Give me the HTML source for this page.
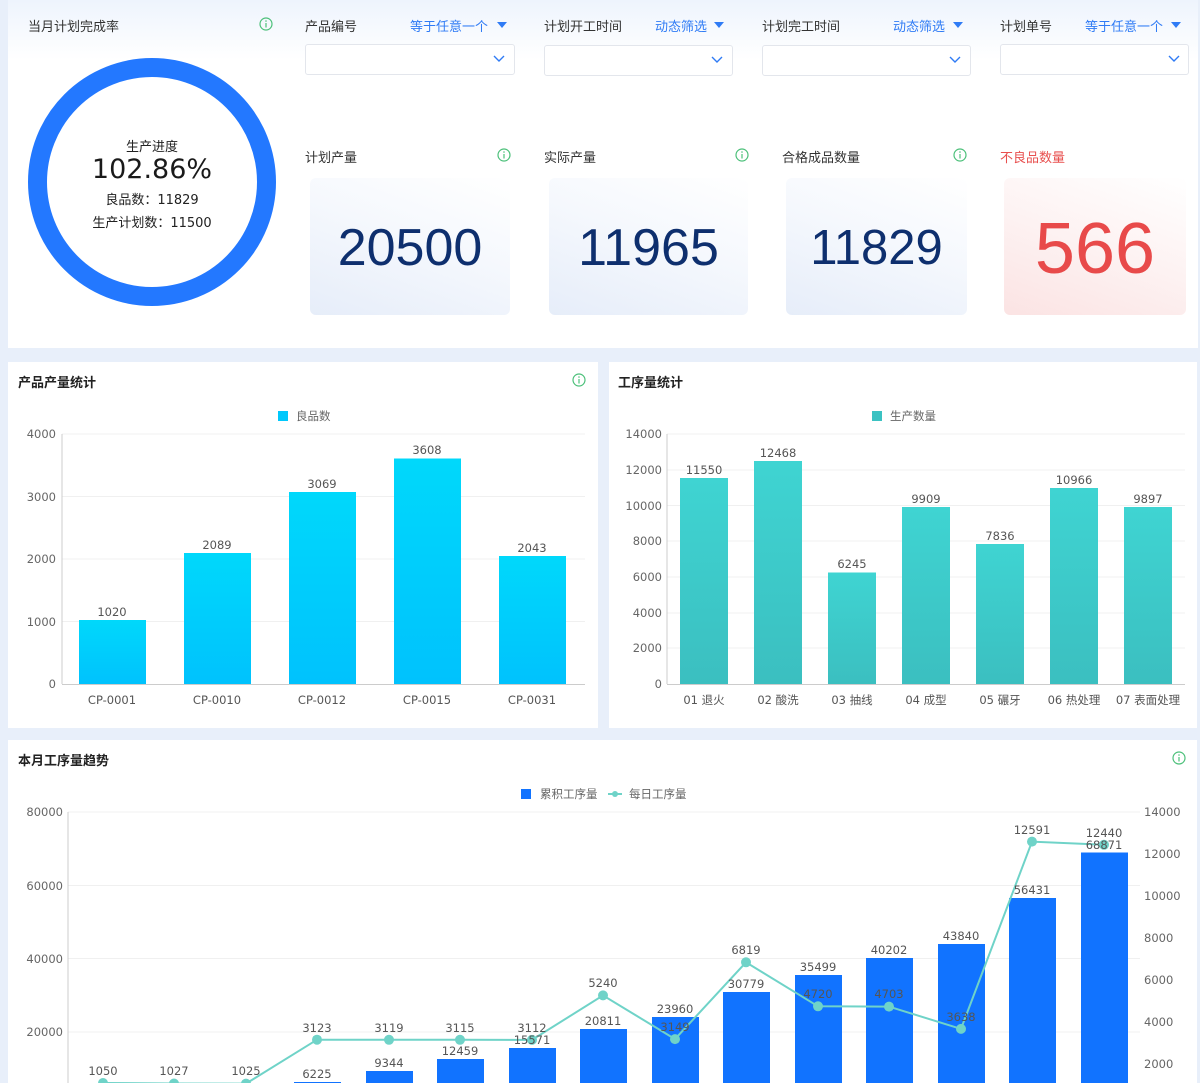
<!DOCTYPE html>
<html><head><meta charset="utf-8"><style>
*{margin:0;padding:0;box-sizing:border-box}
body{width:1200px;height:1083px;overflow:hidden;background:#e8effa;font-family:"Liberation Sans","Noto Sans CJK SC",sans-serif;position:relative;color:#333}
.a{position:absolute;white-space:nowrap}
.panel{position:absolute;background:#fff}
.lbl{font-size:13px;color:#333}
.blue{font-size:13px;color:#2f7bf5}
.sel{position:absolute;height:31px;border:1px solid #e3e6ec;border-radius:3px;background:#fff}
.card{position:absolute;top:178px;height:137px;border-radius:6px;background:linear-gradient(20deg,#e6edf9 0%,#f5f8fd 55%,#ffffff 100%)}
.num{position:absolute;left:0;right:0;text-align:center;font-family:"Liberation Sans",sans-serif;color:#0e2f6e}
.ttl{font-size:13px;font-weight:bold;color:#222}
.dv{font-family:"DejaVu Sans","Noto Sans CJK SC",sans-serif}
</style></head><body>
<div class="panel" style="left:8px;top:0;width:1190px;height:348px;background:linear-gradient(180deg,#eef4fd 0,#fff 60px,#fff 100%)"></div>
<div class="a lbl" style="left:28px;top:16px">当月计划完成率</div>
<svg class="a" style="left:0;top:0" width="1200" height="348">
<g fill="none" stroke="#4cc07a" stroke-width="1.2"><circle cx="266" cy="24" r="6"/><circle cx="504" cy="155" r="6"/><circle cx="742" cy="155" r="6"/><circle cx="960" cy="155" r="6"/></g>
<g fill="#4cc07a"><rect x="265.4" y="23" width="1.2" height="4.5"/><circle cx="266" cy="21" r=".8"/><rect x="503.4" y="154" width="1.2" height="4.5"/><circle cx="504" cy="152" r=".8"/><rect x="741.4" y="154" width="1.2" height="4.5"/><circle cx="742" cy="152" r=".8"/><rect x="959.4" y="154" width="1.2" height="4.5"/><circle cx="960" cy="152" r=".8"/></g>
<circle cx="152" cy="182" r="114.5" fill="none" stroke="#2378ff" stroke-width="19"/>
<g fill="#2f7bf5"><path d="M497 22h10l-5 6z"/><path d="M714 22h10l-5 6z"/><path d="M953 22h10l-5 6z"/><path d="M1171 22h10l-5 6z"/></g>
</svg>
<div class="a" style="left:52px;width:200px;text-align:center;top:136px;font-size:13px;color:#222">生产进度</div>
<div class="a dv" style="left:52px;width:200px;text-align:center;top:154px;font-size:27px;color:#1a1a1a">102.86%</div>
<div class="a dv" style="left:52px;width:200px;text-align:center;top:189px;font-size:13px;color:#222">良品数：11829</div>
<div class="a dv" style="left:52px;width:200px;text-align:center;top:212px;font-size:13px;color:#222">生产计划数：11500</div>

<div class="a lbl" style="left:305px;top:16px">产品编号</div><div class="a blue" style="left:410px;top:16px">等于任意一个</div>
<div class="a lbl" style="left:544px;top:16px">计划开工时间</div><div class="a blue" style="left:655px;top:16px">动态筛选</div>
<div class="a lbl" style="left:762px;top:16px">计划完工时间</div><div class="a blue" style="left:893px;top:16px">动态筛选</div>
<div class="a lbl" style="left:1000px;top:16px">计划单号</div><div class="a blue" style="left:1085px;top:16px">等于任意一个</div>
<div class="sel" style="left:305px;top:44px;width:210px"></div>
<div class="sel" style="left:544px;top:45px;width:189px"></div>
<div class="sel" style="left:762px;top:45px;width:209px"></div>
<div class="sel" style="left:1000px;top:44px;width:189px"></div>
<svg class="a" style="left:0;top:0" width="1200" height="80">
<g fill="none" stroke="#2f7bf5" stroke-width="1.4"><path d="M494 56l5 5 5-5"/><path d="M712 57l5 5 5-5"/><path d="M950 57l5 5 5-5"/><path d="M1169 56l5 5 5-5"/></g>
</svg>

<div class="a lbl" style="left:305px;top:147px">计划产量</div>
<div class="a lbl" style="left:544px;top:147px">实际产量</div>
<div class="a lbl" style="left:782px;top:147px">合格成品数量</div>
<div class="a lbl" style="left:1000px;top:147px;color:#e8504f">不良品数量</div>
<div class="card" style="left:310px;width:200px"><div class="num" style="top:40px;font-size:52px">20500</div></div>
<div class="card" style="left:549px;width:199px"><div class="num" style="top:40px;font-size:52px">11965</div></div>
<div class="card" style="left:786px;width:181px"><div class="num" style="top:42px;font-size:49px">11829</div></div>
<div class="card" style="left:1004px;width:182px;background:linear-gradient(20deg,#fbe3e3 0%,#fdf2f2 50%,#fff 100%)"><div class="num" style="top:30px;font-size:72px;color:#e84a4a">566</div></div>

<div class="panel" style="left:8px;top:362px;width:590px;height:366px"></div>
<div class="panel" style="left:609px;top:362px;width:588px;height:366px"></div>
<div class="panel" style="left:8px;top:740px;width:1189px;height:343px"></div>
<div class="a ttl" style="left:18px;top:372px">产品产量统计</div>
<div class="a ttl" style="left:618px;top:372px">工序量统计</div>
<div class="a ttl" style="left:18px;top:750px">本月工序量趋势</div>

<svg class="a" style="left:0;top:0" width="1200" height="1083" font-family="DejaVu Sans,Noto Sans CJK SC,sans-serif" font-size="11.5">
<defs>
<linearGradient id="g1" x1="0" y1="0" x2="0" y2="1"><stop offset="0" stop-color="#00d8fb"/><stop offset="1" stop-color="#00c2fd"/></linearGradient>
<linearGradient id="g2" x1="0" y1="0" x2="0" y2="1"><stop offset="0" stop-color="#3fd4d2"/><stop offset="1" stop-color="#3bbfc0"/></linearGradient>
</defs>
<g fill="none" stroke="#4cc07a" stroke-width="1.2"><circle cx="579" cy="380" r="6"/><circle cx="1179" cy="758" r="6"/></g>
<g fill="#4cc07a"><rect x="578.4" y="379" width="1.2" height="4.5"/><circle cx="579" cy="377" r=".8"/><rect x="1178.4" y="757" width="1.2" height="4.5"/><circle cx="1179" cy="755" r=".8"/></g>
<!-- chart1 -->
<rect x="278" y="411" width="10" height="10" fill="#00c8fc"/><text x="296" y="420" fill="#666">良品数</text>
<g stroke="#f0f0f0"><line x1="62" x2="585" y1="434" y2="434"/><line x1="62" x2="585" y1="496.5" y2="496.5"/><line x1="62" x2="585" y1="559" y2="559"/><line x1="62" x2="585" y1="621.5" y2="621.5"/></g>
<g stroke="#ccc"><line x1="62" x2="62" y1="434" y2="684"/><line x1="62" x2="585" y1="684.5" y2="684.5"/></g>
<g fill="#666" text-anchor="end"><text x="56" y="438">4000</text><text x="56" y="501">3000</text><text x="56" y="563">2000</text><text x="56" y="626">1000</text><text x="56" y="688">0</text></g>
<g fill="url(#g1)"><rect x="79" y="620" width="67" height="64"/><rect x="184" y="553" width="67" height="131"/><rect x="289" y="492" width="67" height="192"/><rect x="394" y="458.5" width="67" height="225.5"/><rect x="499" y="556" width="67" height="128"/></g>
<g fill="#555" text-anchor="middle"><text x="112" y="616">1020</text><text x="217" y="549">2089</text><text x="322" y="488">3069</text><text x="427" y="454">3608</text><text x="532" y="552">2043</text>
<text x="112" y="704">CP-0001</text><text x="217" y="704">CP-0010</text><text x="322" y="704">CP-0012</text><text x="427" y="704">CP-0015</text><text x="532" y="704">CP-0031</text></g>
<!-- chart2 -->
<rect x="872" y="411" width="10" height="10" fill="#3bc2c2"/><text x="890" y="420" fill="#666">生产数量</text>
<g stroke="#f0f0f0"><line x1="667" x2="1185" y1="434" y2="434"/><line x1="667" x2="1185" y1="470" y2="470"/><line x1="667" x2="1185" y1="505.5" y2="505.5"/><line x1="667" x2="1185" y1="541" y2="541"/><line x1="667" x2="1185" y1="577" y2="577"/><line x1="667" x2="1185" y1="613" y2="613"/><line x1="667" x2="1185" y1="648" y2="648"/></g>
<g stroke="#ccc"><line x1="667" x2="667" y1="434" y2="684"/><line x1="667" x2="1185" y1="684.5" y2="684.5"/></g>
<g fill="#666" text-anchor="end"><text x="662" y="438">14000</text><text x="662" y="474">12000</text><text x="662" y="510">10000</text><text x="662" y="545">8000</text><text x="662" y="581">6000</text><text x="662" y="617">4000</text><text x="662" y="652">2000</text><text x="662" y="688">0</text></g>
<g fill="url(#g2)"><rect x="680" y="478" width="48" height="206"/><rect x="754" y="461" width="48" height="223"/><rect x="828" y="572.5" width="48" height="111.5"/><rect x="902" y="507" width="48" height="177"/><rect x="976" y="544" width="48" height="140"/><rect x="1050" y="488" width="48" height="196"/><rect x="1124" y="507" width="48" height="177"/></g>
<g fill="#555" text-anchor="middle"><text x="704" y="474">11550</text><text x="778" y="457">12468</text><text x="852" y="568">6245</text><text x="926" y="503">9909</text><text x="1000" y="540">7836</text><text x="1074" y="484">10966</text><text x="1148" y="503">9897</text>
<text x="704" y="704">01 退火</text><text x="778" y="704">02 酸洗</text><text x="852" y="704">03 抽线</text><text x="926" y="704">04 成型</text><text x="1000" y="704">05 碾牙</text><text x="1074" y="704">06 热处理</text><text x="1148" y="704">07 表面处理</text></g>
<!-- chart3 -->
<rect x="521" y="789" width="10" height="10" fill="#1173ff"/><text x="540" y="798" fill="#666">累积工序量</text>
<line x1="608" x2="622" y1="794" y2="794" stroke="#6fd3c8" stroke-width="2"/><circle cx="615" cy="794" r="3" fill="#6fd3c8"/><text x="629" y="798" fill="#666">每日工序量</text>
<g stroke="#f0f0f0"><line x1="68" x2="1140" y1="812" y2="812"/><line x1="68" x2="1140" y1="885.5" y2="885.5"/><line x1="68" x2="1140" y1="958.5" y2="958.5"/><line x1="68" x2="1140" y1="1032" y2="1032"/></g>
<line x1="68" x2="68" y1="812" y2="1083" stroke="#ccc"/>
<g fill="#666" text-anchor="end"><text x="63" y="816">80000</text><text x="63" y="890">60000</text><text x="63" y="963">40000</text><text x="63" y="1036">20000</text></g>
<g fill="#666"><text x="1144" y="816">14000</text><text x="1144" y="858">12000</text><text x="1144" y="900">10000</text><text x="1144" y="942">8000</text><text x="1144" y="984">6000</text><text x="1144" y="1026">4000</text><text x="1144" y="1068">2000</text></g>
<g fill="#1173ff"><rect x="80" y="1101" width="47" height="10"/><rect x="151" y="1097" width="47" height="10"/><rect x="222" y="1094" width="47" height="10"/><rect x="294" y="1082" width="47" height="10"/><rect x="366" y="1071" width="47" height="20"/><rect x="437" y="1059" width="47" height="30"/><rect x="509" y="1048" width="47" height="40"/><rect x="580" y="1029" width="47" height="60"/><rect x="652" y="1017" width="47" height="70"/><rect x="723" y="992" width="47" height="100"/><rect x="795" y="975" width="47" height="110"/><rect x="866" y="958" width="47" height="130"/><rect x="938" y="944" width="47" height="140"/><rect x="1009" y="898" width="47" height="190"/><rect x="1081" y="852.5" width="47" height="240"/></g>
<polyline fill="none" stroke="#6fd3c8" stroke-width="2" points="103,1083 174,1083.5 246,1083.6 317,1039.7 389,1039.8 460,1039.8 532,1039.9 603,995.4 675,1039.1 746,962.3 818,1006.3 889,1006.6 961,1028.9 1032,841.6 1104,844.8"/>
<g fill="#6fd3c8"><circle cx="103" cy="1083" r="5"/><circle cx="174" cy="1083.5" r="5"/><circle cx="246" cy="1083.6" r="5"/><circle cx="317" cy="1039.7" r="5"/><circle cx="389" cy="1039.8" r="5"/><circle cx="460" cy="1039.8" r="5"/><circle cx="532" cy="1039.9" r="5"/><circle cx="603" cy="995.4" r="5"/><circle cx="675" cy="1039.1" r="5"/><circle cx="746" cy="962.3" r="5"/><circle cx="818" cy="1006.3" r="5"/><circle cx="889" cy="1006.6" r="5"/><circle cx="961" cy="1028.9" r="5"/><circle cx="1032" cy="841.6" r="5"/><circle cx="1104" cy="844.8" r="5"/></g>
<g fill="#555" text-anchor="middle"><text x="317" y="1078">6225</text><text x="389" y="1067">9344</text><text x="460" y="1055">12459</text><text x="532" y="1044">15571</text><text x="603" y="1025">20811</text><text x="675" y="1013">23960</text><text x="746" y="988">30779</text><text x="818" y="971">35499</text><text x="889" y="954">40202</text><text x="961" y="940">43840</text><text x="1032" y="894">56431</text><text x="1104" y="849">68871</text>
<text x="103" y="1075">1050</text><text x="174" y="1075">1027</text><text x="246" y="1075">1025</text><text x="317" y="1032">3123</text><text x="389" y="1032">3119</text><text x="460" y="1032">3115</text><text x="532" y="1032">3112</text><text x="603" y="987">5240</text><text x="675" y="1031">3149</text><text x="746" y="954">6819</text><text x="818" y="998">4720</text><text x="889" y="998">4703</text><text x="961" y="1021">3638</text><text x="1032" y="834">12591</text><text x="1104" y="837">12440</text></g>
</svg>
</body></html>
